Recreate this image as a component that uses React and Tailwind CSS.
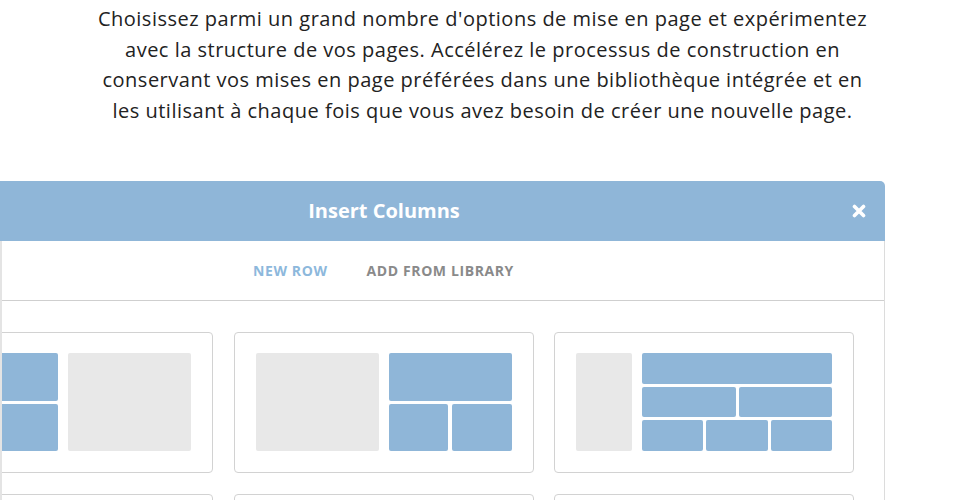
import React from 'react';

const BLUE = 'bg-[#8fb6d8]';

const Block = ({ className = '' }) => <div className={`${BLUE} rounded-[2px] ${className}`} />;
const Empty = ({ className = '' }) => <div className={`bg-[#e8e8e8] rounded-[2px] ${className}`} />;

const Card = ({ children }) => (
  <div className="h-[141px] border border-[#d2d2d2] rounded-[4px] bg-white px-[21px] pt-[20px] pb-[21px]">
    <div className="flex h-full gap-[10px]">{children}</div>
  </div>
);

const App = () => {
  return (
    <div className="w-[965px] h-[500px] overflow-hidden bg-white">
      <p
        className="pt-[4px] text-center text-[20px] font-normal tracking-[0.5px] leading-[30.5px] text-[#222] whitespace-nowrap"
        style={{ fontFamily: '"Open Sans", sans-serif' }}
      >
        Choisissez parmi un grand nombre d'options de mise en page et expérimentez
        <br />
        avec la structure de vos pages. Accélérez le processus de construction en
        <br />
        conservant vos mises en page préférées dans une bibliothèque intégrée et en
        <br />
        les utilisant à chaque fois que vous avez besoin de créer une nouvelle page.
      </p>

      <div style={{ fontFamily: '"Open Sans", sans-serif' }}>
        <div className={`mt-[55px] ml-[-117px] w-[1002px] h-[60px] ${BLUE} rounded-tr-[5px] flex items-center relative`}>
          <h2 className="flex-1 text-center text-white font-bold text-[20px]">Insert Columns</h2>
          <button type="button" className="absolute right-[19px] top-[23px] text-white">
            <svg width="14" height="14" viewBox="0 0 14 14">
              <path d="M2.5 2.5 L11.5 11.5 M11.5 2.5 L2.5 11.5" stroke="white" strokeWidth="3.6" strokeLinecap="round" />
            </svg>
          </button>
        </div>

        <div className="w-[885px] border-l-2 border-[#e4e4e4] overflow-hidden">
          <div className="ml-[-119px] w-[1002px] border-r border-[#dcdcdc]">
            <div className="h-[59px] flex items-center justify-center gap-[39px] text-[14px] font-bold tracking-[0.6px]">
              <span className="text-[#8db8dc]">NEW ROW</span>
              <span className="text-[#8a8a8a]">ADD FROM LIBRARY</span>
            </div>
            <div className="h-px bg-[#cfcfcf]" />
            <div className="pt-[31px] pl-[30px] grid grid-cols-[300px_300px_300px] gap-x-[20.5px] gap-y-[21px]">
              <Card>
                <div className="w-[123px] flex flex-col gap-[3px]">
                  <Block className="flex-1" />
                  <Block className="flex-1" />
                </div>
                <Empty className="flex-1" />
              </Card>
              <Card>
                <Empty className="w-[123px]" />
                <div className="flex-1 flex flex-col gap-[3px]">
                  <Block className="flex-1" />
                  <div className="flex-1 flex gap-[4px]">
                    <Block className="flex-1" />
                    <Block className="flex-1" />
                  </div>
                </div>
              </Card>
              <Card>
                <Empty className="w-[56px]" />
                <div className="flex-1 flex flex-col gap-[3px]">
                  <Block className="flex-1" />
                  <div className="flex-1 flex gap-[3px]">
                    <Block className="flex-1" />
                    <Block className="flex-1" />
                  </div>
                  <div className="flex-1 flex gap-[3px]">
                    <Block className="flex-1" />
                    <Block className="flex-1" />
                    <Block className="flex-1" />
                  </div>
                </div>
              </Card>
              <Card />
              <Card />
              <Card />
            </div>
          </div>
        </div>
      </div>
    </div>
  );
};

export default App;
